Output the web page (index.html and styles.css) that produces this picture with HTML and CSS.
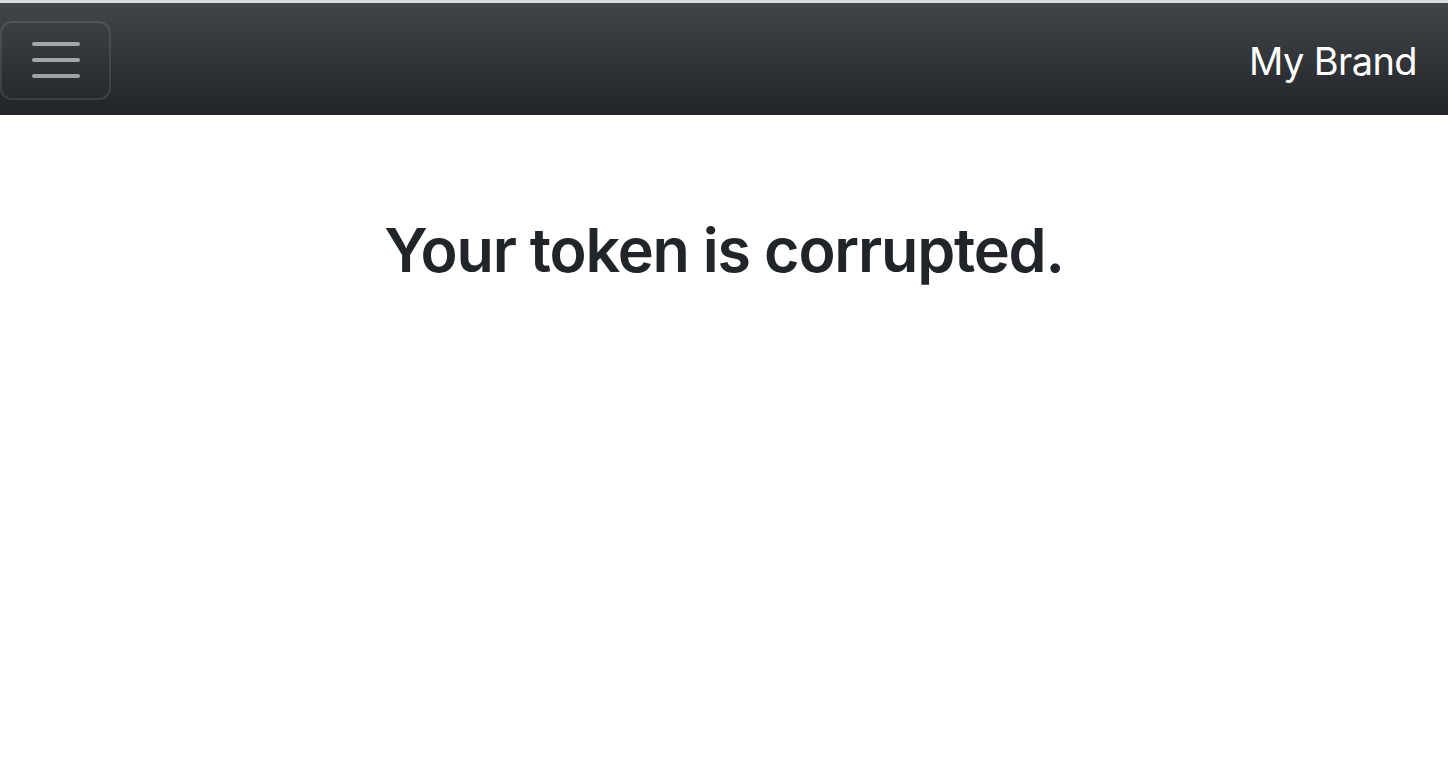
FILE: index.html
```html
<!DOCTYPE html>
<html lang="en">
<head>
<meta charset="utf-8">
<title>My Brand</title>
<link rel="stylesheet" href="styles.css">
</head>
<body>
<div class="topline"></div>
<nav class="navbar">
  <button class="toggler" type="button" aria-label="Toggle navigation">
    <svg class="toggler-icon" viewBox="0 0 30 30" width="60" height="60" aria-hidden="true">
      <path d="M4 7h22M4 15h22M4 23h22" stroke="rgba(255,255,255,0.55)" stroke-width="2" stroke-linecap="round" fill="none"/>
    </svg>
  </button>
  <a class="brand" href="#">My Brand</a>
</nav>
<main class="content">
  <h1 class="title">Your token is corrupted.</h1>
</main>
</body>
</html>
```
FILE: styles.css
```css
html, body {
  margin: 0;
  padding: 0;
  background: #fff;
  font-family: Inter, "Liberation Sans", Arial, sans-serif;
  color: #212529;
}
.topline {
  height: 3px;
  background: #dcdcdc;
}
.navbar {
  display: flex;
  align-items: center;
  justify-content: space-between;
  height: 112px;
  box-sizing: border-box;
  padding: 0 31px 0 0;
  background-color: #212529;
  background-image: linear-gradient(180deg, rgba(255,255,255,0.15), rgba(255,255,255,0));
}
.toggler {
  display: flex;
  align-items: center;
  justify-content: center;
  width: 111px;
  height: 79px;
  margin-top: 2px;
  padding: 0;
  background: transparent;
  border: 2px solid rgba(255,255,255,0.1);
  border-radius: 12px;
  cursor: pointer;
}
.toggler-icon {
  display: block;
}
.brand {
  color: #fff;
  text-decoration: none;
  font-size: 38px;
  line-height: 1.5;
  letter-spacing: -0.6px;
  margin-top: 4px;
}
.content {
  display: flex;
  justify-content: center;
  padding-top: 99px;
}
.title {
  margin: 0;
  font-size: 61px;
  font-weight: 600;
  line-height: 1.2;
  letter-spacing: -1.2px;
}
```
